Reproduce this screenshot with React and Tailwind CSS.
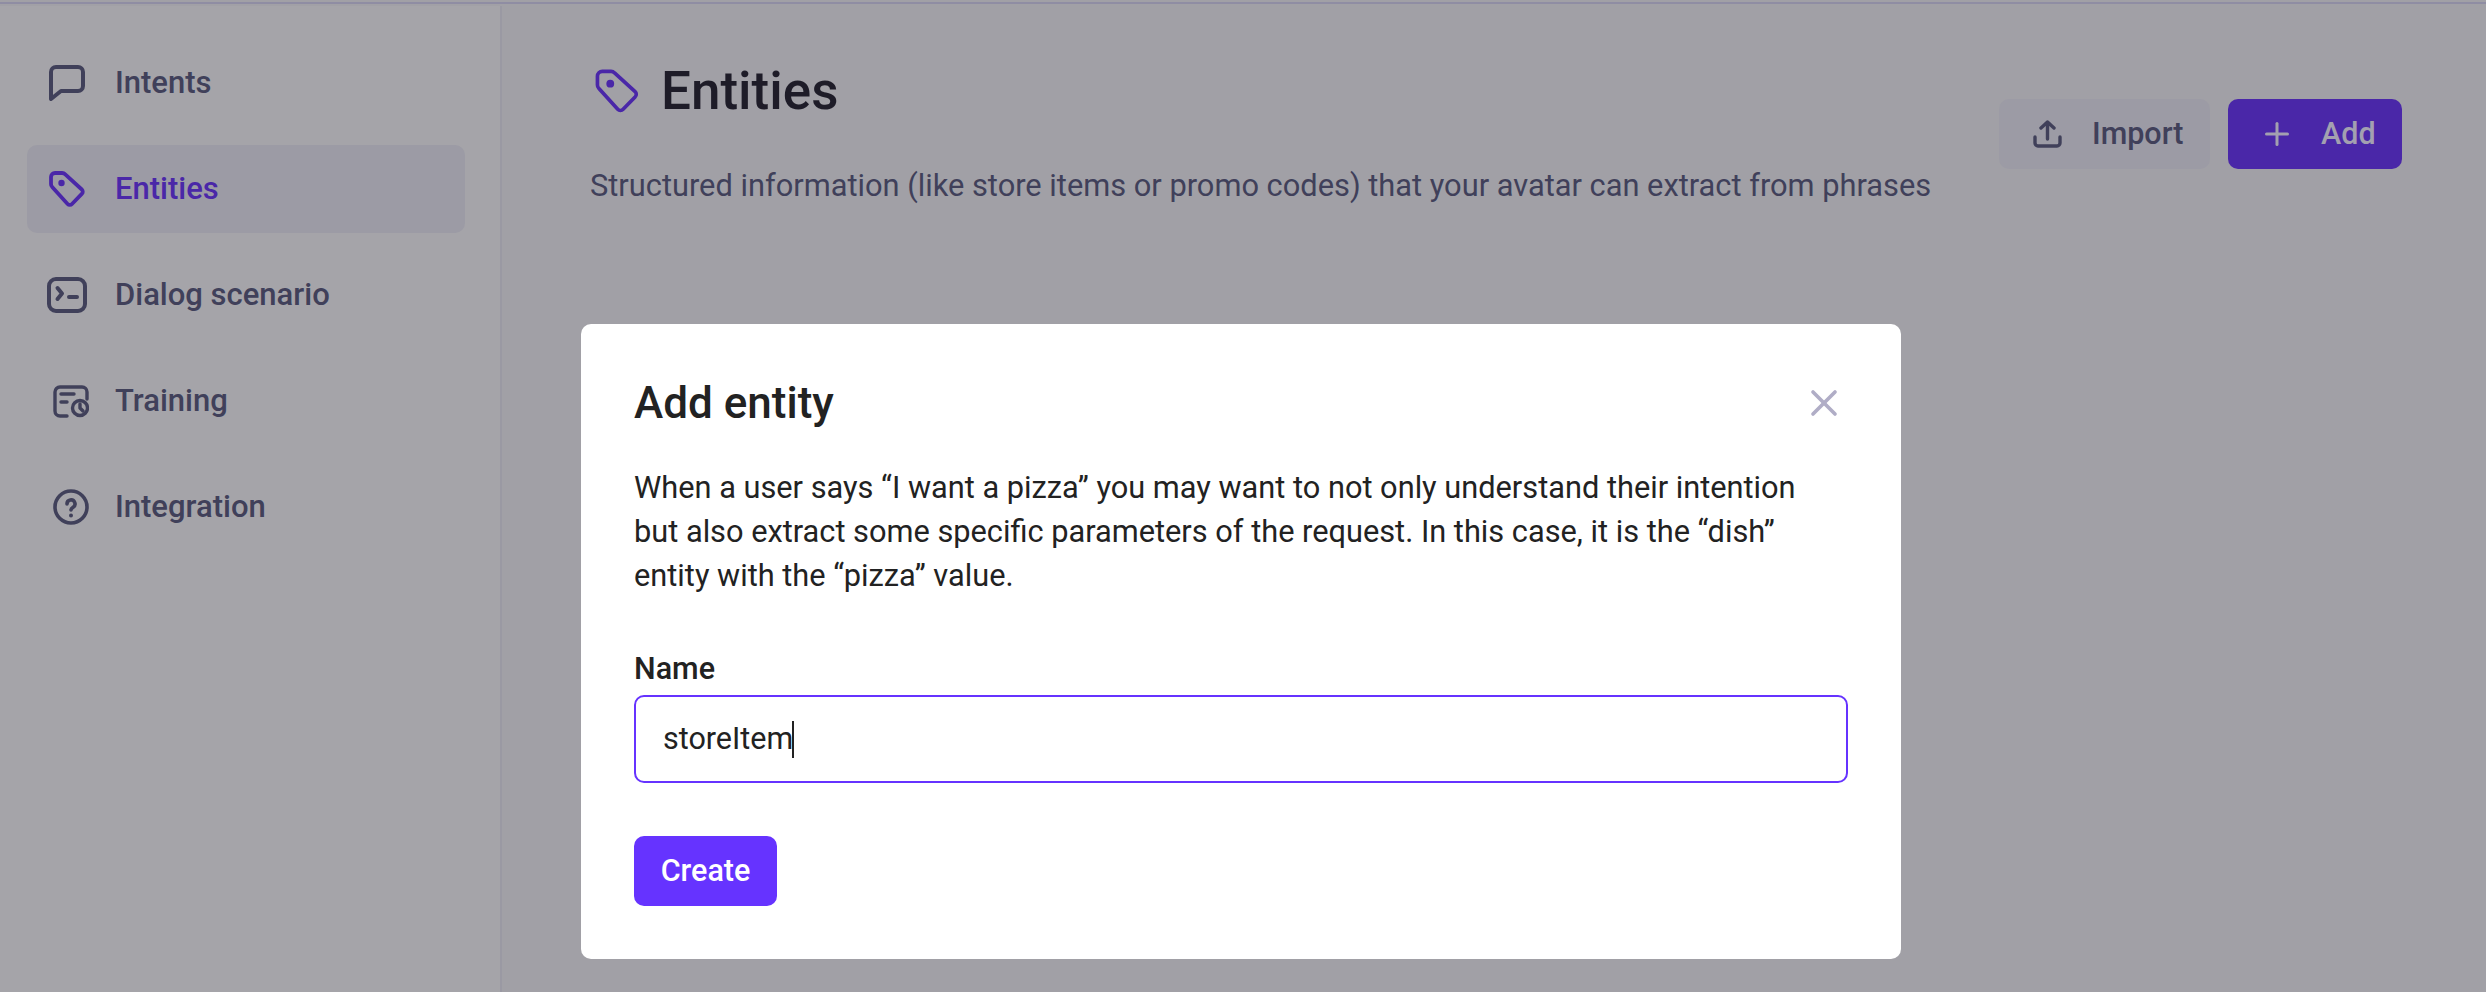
import React from 'react';
import { Plus, X } from 'lucide-react';

function TagIcon({ className, strokeWidth }) {
  return (
    <svg className={className} viewBox="0 0 36 36" fill="none" stroke="currentColor" strokeWidth={strokeWidth} strokeLinejoin="round">
      <path d="M2 6a4 4 0 0 1 4-4h7a4 4 0 0 1 3 1.200l16.800 15.300a3 3 0 0 1 0 4.400L23 33a3 3 0 0 1-4.400 0L3.200 16a4 4 0 0 1-1.200-3z" />
      <circle cx="12.500" cy="12" r="3.200" fill="currentColor" stroke="none" />
    </svg>
  );
}

const navItems = [
  {
    label: 'Intents',
    icon: (
      <svg className="h-[36px] w-[36px]" viewBox="0 0 36 36" fill="none" stroke="currentColor" strokeWidth="4" strokeLinejoin="round">
        <path d="M2 7a5 5 0 0 1 5-5h22a5 5 0 0 1 5 5v14a5 5 0 0 1-5 5H12L2 34z" />
      </svg>
    ),
  },
  {
    label: 'Entities',
    active: true,
    icon: <TagIcon className="h-[36px] w-[36px]" strokeWidth="3.800" />,
  },
  {
    label: 'Dialog scenario',
    icon: (
      <svg className="h-[36px] w-[40px]" viewBox="0 0 40 36" fill="none" stroke="currentColor" strokeWidth="4" strokeLinecap="round" strokeLinejoin="round">
        <rect x="2" y="2" width="36" height="32" rx="7" />
        <path d="M10.500 11l4.500 5.500-4.500 5.500M22 20h8" />
      </svg>
    ),
  },
  {
    label: 'Training',
    icon: (
      <svg className="ml-[9px] h-[33px] w-[36px]" viewBox="0 0 36 33" fill="none" stroke="currentColor" strokeWidth="3.400" strokeLinecap="round" strokeLinejoin="round">
        <path d="M14 31H7a5 5 0 0 1-5-5V7a5 5 0 0 1 5-5h22a5 5 0 0 1 5 5v7" />
        <path d="M8 9h13M8 17h6" />
        <circle cx="27" cy="23" r="7.500" />
        <path d="M27 19v4l3 3" />
      </svg>
    ),
  },
  {
    label: 'Integration',
    icon: (
      <svg className="ml-[9px] h-[36px] w-[36px]" viewBox="0 0 36 36" fill="none" stroke="currentColor" strokeWidth="3.600" strokeLinecap="round">
        <circle cx="18" cy="18" r="16" />
        <path d="M14 15a4 4 0 1 1 6 3.400c-1.200.7-2 1.300-2 2.600" />
        <circle cx="18" cy="26.500" r="2" fill="currentColor" stroke="none" />
      </svg>
    ),
  },
];

export default function App() {
  return (
    <div className="relative h-[992px] w-[2486px] overflow-hidden bg-[#a1a0a6] font-['Roboto',sans-serif] text-[#40405a]">
      <div className="mt-[2px] h-[4px] border-t-2 border-[#8f8da3]" />
      <div className="flex h-[986px]">
        {/* Sidebar */}
        <aside className="w-[502px] shrink-0 border-r-2 border-[#9a99a3] bg-[#a5a4a9] pl-[27px] pr-[35px] pt-[33px]">
          <nav className="flex flex-col gap-[18px]">
            {navItems.map(item => (
              <div
                key={item.label}
                className={`flex h-[88px] items-center rounded-[10px] ${item.active ? 'bg-[#9c9ba5] text-[#4a27a8]' : ''}`}
              >
                <span className="flex w-[79px] shrink-0 justify-center">{item.icon}</span>
                <span className="ml-[9px] text-[31px] font-medium">{item.label}</span>
              </div>
            ))}
          </nav>
        </aside>

        {/* Main */}
        <main className="flex flex-1 items-start justify-between pl-[88px] pr-[84px] pt-[55px]">
          <div>
            <div className="flex items-center gap-[22px]">
              <TagIcon className="ml-[5px] h-[44px] w-[44px] text-[#4a27a8]" strokeWidth="3" />
              <h1 className="text-[53px] leading-[60px] font-medium text-[#1e1c28]">Entities</h1>
            </div>
            <p className="mt-[43px] text-[30.800px] leading-[44px]">
              Structured information (like store items or promo codes) that your avatar can extract from phrases
            </p>
          </div>
          <div className="mt-[38px] flex gap-[18px]">
            <button className="flex h-[70px] w-[211px] items-center rounded-[10px] bg-[#9c9ba5] pl-[34px] text-[30.500px] font-medium">
              <svg className="h-[28px] w-[29px]" viewBox="0 0 29 28" fill="none" stroke="currentColor" strokeWidth="3.400" strokeLinecap="round" strokeLinejoin="round">
                <path d="M2 17v6a3 3 0 0 0 3 3h19a3 3 0 0 0 3-3v-6M14.500 19V2M8 8l6.500-6L21 8" />
              </svg>
              <span className="ml-[30px]">Import</span>
            </button>
            <button className="flex h-[70px] w-[174px] items-center rounded-[10px] bg-[#4a27a8] pl-[31px] text-[30.500px] font-medium text-[#a3a0b0]">
              <Plus className="h-[36px] w-[36px]" strokeWidth={2} />
              <span className="ml-[26px]">Add</span>
            </button>
          </div>
        </main>
      </div>

      {/* Modal */}
      <div className="absolute left-[581px] top-[324px] w-[1320px] rounded-[10px] bg-white px-[53px] pb-[53px] pt-[53px] text-[#222222]">
        <div className="flex items-center justify-between">
          <h2 className="text-[44px] leading-[52px] font-medium">Add entity</h2>
          <X className="mr-[2px] h-[44px] w-[44px] text-[#b0adc6]" strokeWidth={2} />
        </div>
        <p className="mt-[37px] w-[1200px] text-[30.750px] leading-[44px]">
          When a user says “I want a pizza” you may want to not only understand their intention but also extract some specific parameters of the request. In this case, it is the “dish” entity with the “pizza” value.
        </p>
        <label className="mt-[53px] block text-[30.500px] leading-[36px] font-medium">Name</label>
        <div className="mt-[8px] flex h-[88px] w-[1214px] items-center rounded-[10px] border-2 border-[#6633ff] pl-[27px] text-[30.500px]">
          <span>storeItem</span>
          <span className="ml-[-1px] h-[37px] w-[2px] bg-[#222222]" />
        </div>
        <button className="mt-[53px] flex h-[70px] w-[143px] items-center justify-center rounded-[10px] bg-[#6633ff] text-[30.500px] font-medium text-white">
          Create
        </button>
      </div>
    </div>
  );
}
